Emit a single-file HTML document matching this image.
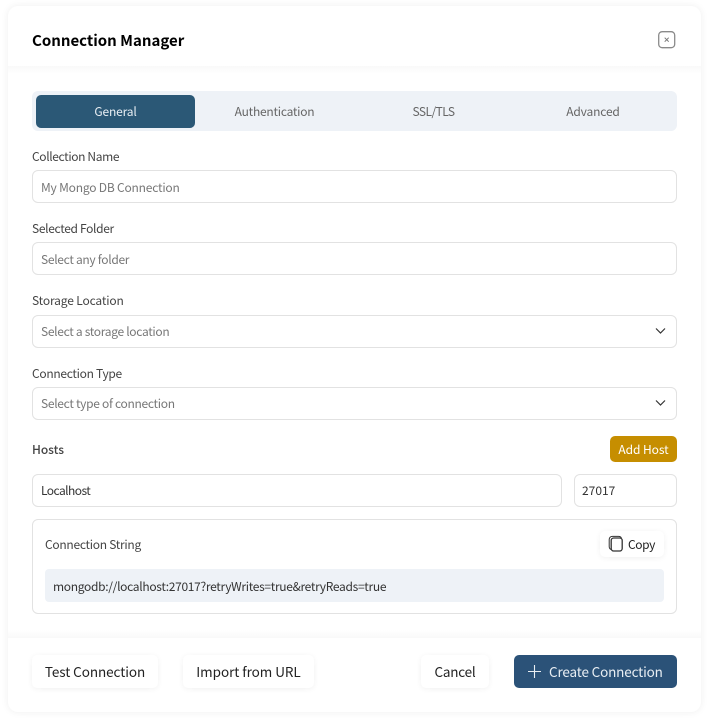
<!DOCTYPE html>
<html><head><meta charset="utf-8"><style>
*{box-sizing:border-box;margin:0;padding:0}
html,body{width:709px;height:722px;background:#fff;overflow:hidden}
body{position:relative;font-family:"Noto Sans CJK JP","Liberation Sans",sans-serif;color:#333}
.a{position:absolute}
.t{position:absolute;white-space:nowrap;line-height:20px;height:20px;font-size:12px;letter-spacing:-.3px}
.card{left:8px;top:6px;width:693px;height:706px;background:#fff;border-radius:10px;box-shadow:0 0 8px rgba(0,0,0,.07)}
.inp{position:absolute;background:#fff;border:1px solid #e2e2e2;border-radius:6px}
.btn{position:absolute;background:#fff;border-radius:5px;box-shadow:0 1px 6px rgba(0,0,0,.06)}
.lab{color:#444}.ph{color:#777}
.tab{color:#666;text-align:center}
.fb{font-size:13.5px;color:#222;letter-spacing:-.07px}
</style></head><body>
<div class="a card"></div>
<div class="a" style="left:8px;top:66px;width:693px;height:8px;background:linear-gradient(#f9f9f9,#fff)"></div>
<div class="a" style="left:8px;top:630px;width:693px;height:8px;background:linear-gradient(#fff,#f9f9f9)"></div>
<div class="t" style="left:32px;top:31px;font-size:15px;font-weight:700;color:#000;letter-spacing:0">Connection Manager</div>
<svg class="a" style="left:658px;top:31px" width="18" height="18" viewBox="0 0 18 18" fill="none"><rect x=".7" y=".7" width="16" height="16" rx="3.5" stroke="#8a8a8a" stroke-width="1.3"/><path d="M6.7 6.7l4 4m0-4l-4 4" stroke="#777" stroke-width="1"/></svg>

<div class="a" style="left:32px;top:91px;width:645px;height:40px;background:#eef2f7;border-radius:6px"></div>
<div class="a" style="left:36px;top:95px;width:159px;height:33px;background:#2b5876;border-radius:5px"></div>
<div class="t tab" style="left:36px;top:102px;width:159px;color:#e8eef3;letter-spacing:-.17px">General</div>
<div class="t tab" style="left:195px;top:102px;width:159px;letter-spacing:-.24px">Authentication</div>
<div class="t tab" style="left:354px;top:102px;width:159px;letter-spacing:-.57px">SSL/TLS</div>
<div class="t tab" style="left:513px;top:102px;width:160px;letter-spacing:-.16px">Advanced</div>

<div class="t lab" style="left:32px;top:147px;letter-spacing:-.37px">Collection Name</div>
<div class="inp" style="left:32px;top:170px;width:645px;height:33px"></div>
<div class="t ph" style="left:41px;top:178px;letter-spacing:-.2px">My Mongo DB Connection</div>

<div class="t lab" style="left:32px;top:219px;letter-spacing:-.33px">Selected Folder</div>
<div class="inp" style="left:32px;top:242px;width:645px;height:33px"></div>
<div class="t ph" style="left:41px;top:250px">Select any folder</div>

<div class="t lab" style="left:32px;top:291px;letter-spacing:-.15px">Storage Location</div>
<div class="inp" style="left:32px;top:315px;width:645px;height:33px"></div>
<div class="t ph" style="left:41px;top:322px;letter-spacing:-.31px">Select a storage location</div>
<svg class="a" style="left:654px;top:326px" width="13" height="10" viewBox="0 0 13 10" fill="none"><path d="M2 2.5l4.5 4.5 4.5-4.5" stroke="#333" stroke-width="1.2"/></svg>

<div class="t lab" style="left:32px;top:364px">Connection Type</div>
<div class="inp" style="left:32px;top:387px;width:645px;height:33px"></div>
<div class="t ph" style="left:41px;top:394px">Select type of connection</div>
<svg class="a" style="left:654px;top:398px" width="13" height="10" viewBox="0 0 13 10" fill="none"><path d="M2 2.5l4.5 4.5 4.5-4.5" stroke="#333" stroke-width="1.2"/></svg>

<div class="t lab" style="left:32px;top:440px;font-weight:500;letter-spacing:-.04px">Hosts</div>
<div class="a" style="left:610px;top:436px;width:67px;height:26px;background:#c68e00;border-radius:5px"></div>
<div class="t" style="left:610px;top:440px;width:67px;text-align:center;color:#fff;letter-spacing:-.06px">Add Host</div>

<div class="inp" style="left:32px;top:474px;width:530px;height:33px"></div>
<div class="t" style="left:41px;top:481px;letter-spacing:-.55px">Localhost</div>
<div class="inp" style="left:574px;top:474px;width:103px;height:33px"></div>
<div class="t" style="left:582px;top:481px;letter-spacing:0">27017</div>

<div class="inp" style="left:32px;top:519px;width:645px;height:95px"></div>
<div class="t lab" style="left:45px;top:535px;letter-spacing:-.28px">Connection String</div>
<div class="btn" style="left:600px;top:531px;width:64px;height:26px"></div>
<svg class="a" style="left:608px;top:535px" width="16" height="18" viewBox="0 0 16 18" fill="none" stroke="#333"><rect x="3.2" y="3" width="11" height="13" rx="2.5" stroke-width="1.3" fill="#fff"/><path d="M3 14.5C1.8 14 1.2 13 1.2 11.5V4.5C1.2 2.5 2.5 1.4 4.5 1.4H10.5C12 1.4 13 2 13.4 3" stroke-width="1"/></svg>
<div class="t" style="left:628px;top:535px;color:#222;letter-spacing:-.4px">Copy</div>
<div class="a" style="left:45px;top:569px;width:619px;height:33px;background:#eef2f7;border-radius:4px"></div>
<div class="t" style="left:53px;top:577px;letter-spacing:-.31px">mongodb://localhost:27017?retryWrites=true&amp;retryReads=true</div>

<div class="btn" style="left:32px;top:655px;width:126px;height:33px"></div>
<div class="t fb" style="left:32px;top:661px;width:126px;text-align:center">Test Connection</div>
<div class="btn" style="left:183px;top:655px;width:131px;height:33px"></div>
<div class="t fb" style="left:183px;top:661px;width:131px;text-align:center;letter-spacing:-.05px">Import from URL</div>
<div class="btn" style="left:421px;top:655px;width:68px;height:33px"></div>
<div class="t fb" style="left:421px;top:661px;width:68px;text-align:center;letter-spacing:-.2px">Cancel</div>
<div class="a" style="left:514px;top:655px;width:163px;height:33px;background:#2b5278;border-radius:5px"></div>
<svg class="a" style="left:527px;top:664px" width="15" height="15" viewBox="0 0 15 15" fill="none"><path d="M7.5 1v13M1 7.5h13" stroke="#e8eef3" stroke-width="1.1"/></svg>
<div class="t fb" style="left:549px;top:661px;color:#e8eef3;letter-spacing:-.16px">Create Connection</div>
</body></html>
